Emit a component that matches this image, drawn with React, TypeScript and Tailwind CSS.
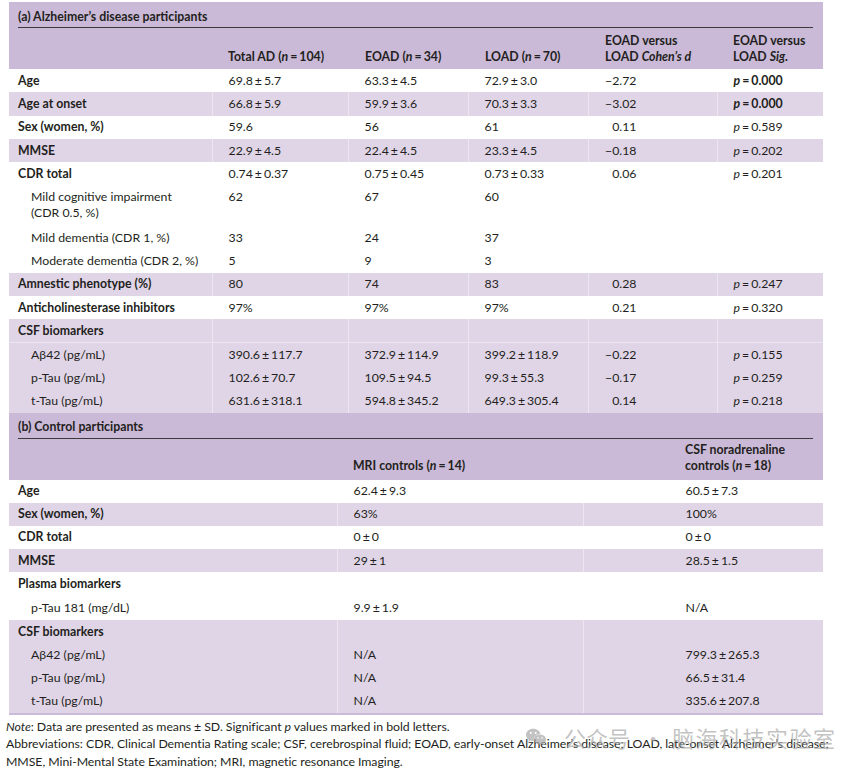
import React from 'react';
import { SiWechat } from 'react-icons/si';

type Row = {
  label: React.ReactNode;
  sub?: boolean;
  shade?: boolean;
  vals: React.ReactNode[];
  d?: string;
  p?: string;
  pBold?: boolean;
  h?: string;
  topLine?: boolean;
};

const pm = (a: string, b: string) => (
  <>
    {a}
    <span className="mx-[2px]">±</span>
    {b}
  </>
);

const N = ({ v }: { v: string }) => (
  <>
    (<i>n</i>
    <span className="mx-[2px]">=</span>
    {v})
  </>
);

const rowsA: Row[] = [
  { label: 'Age', vals: [pm('69.8', '5.7'), pm('63.3', '4.5'), pm('72.9', '3.0')], d: '−2.72', p: '0.000', pBold: true },
  { label: 'Age at onset', shade: true, vals: [pm('66.8', '5.9'), pm('59.9', '3.6'), pm('70.3', '3.3')], d: '−3.02', p: '0.000', pBold: true },
  { label: 'Sex (women, %)', vals: ['59.6', '56', '61'], d: '0.11', p: '0.589' },
  { label: 'MMSE', shade: true, vals: [pm('22.9', '4.5'), pm('22.4', '4.5'), pm('23.3', '4.5')], d: '−0.18', p: '0.202' },
  { label: 'CDR total', vals: [pm('0.74', '0.37'), pm('0.75', '0.45'), pm('0.73', '0.33')], d: '0.06', p: '0.201' },
  {
    label: (
      <>
        Mild cognitive impairment
        <br />
        (CDR 0.5, %)
      </>
    ),
    sub: true,
    vals: ['62', '67', '60'],
    h: 'h-[40.3px]',
  },
  { label: 'Mild dementia (CDR 1, %)', sub: true, vals: ['33', '24', '37'] },
  { label: 'Moderate dementia (CDR 2, %)', sub: true, vals: ['5', '9', '3'] },
  { label: 'Amnestic phenotype (%)', shade: true, vals: ['80', '74', '83'], d: '0.28', p: '0.247' },
  { label: 'Anticholinesterase inhibitors', vals: ['97%', '97%', '97%'], d: '0.21', p: '0.320' },
  { label: 'CSF biomarkers', shade: true, vals: ['', '', ''] },
  { label: 'Aβ42 (pg/mL)', sub: true, shade: true, topLine: true, vals: [pm('390.6', '117.7'), pm('372.9', '114.9'), pm('399.2', '118.9')], d: '−0.22', p: '0.155' },
  { label: 'p-Tau (pg/mL)', sub: true, shade: true, vals: [pm('102.6', '70.7'), pm('109.5', '94.5'), pm('99.3', '55.3')], d: '−0.17', p: '0.259' },
  { label: 't-Tau (pg/mL)', sub: true, shade: true, vals: [pm('631.6', '318.1'), pm('594.8', '345.2'), pm('649.3', '305.4')], d: '0.14', p: '0.218' },
];

const rowsB: Row[] = [
  { label: 'Age', vals: [pm('62.4', '9.3'), pm('60.5', '7.3')], h: 'h-[23px]' },
  { label: 'Sex (women, %)', shade: true, vals: ['63%', '100%'], h: 'h-[23px]' },
  { label: 'CDR total', vals: [pm('0', '0'), pm('0', '0')], h: 'h-[23.5px]' },
  { label: 'MMSE', shade: true, vals: [pm('29', '1'), pm('28.5', '1.5')], h: 'h-[23px]' },
  { label: 'Plasma biomarkers', vals: ['', ''], h: 'h-[23px]' },
  { label: 'p-Tau 181 (mg/dL)', sub: true, vals: [pm('9.9', '1.9'), 'N/A'], h: 'h-[25px]' },
  { label: 'CSF biomarkers', shade: true, vals: ['', ''], h: 'h-[23px]' },
  { label: 'Aβ42 (pg/mL)', sub: true, shade: true, vals: ['N/A', pm('799.3', '265.3')], h: 'h-[23.5px]' },
  { label: 'p-Tau (pg/mL)', sub: true, shade: true, vals: ['N/A', pm('66.5', '31.4')], h: 'h-[23.5px]' },
  { label: 't-Tau (pg/mL)', sub: true, shade: true, vals: ['N/A', pm('335.6', '207.8')], h: 'h-[23.5px]' },
];

const Label = ({ r }: { r: Row }) =>
  r.sub ? <span className="pl-[13px] inline-block">{r.label}</span> : <span className="font-bold">{r.label}</span>;

export default function App() {
  return (
    <div
      className="w-[865px] h-[777px] bg-white text-[#231f20] overflow-hidden"
      style={{ fontFamily: 'Lato, "Noto Sans", sans-serif' }}
    >
      <div className="pt-[2px] pl-[9px]">
        <table className="table-fixed border-collapse w-[814px] text-[12.3px] leading-[16px]">
          <colgroup>
            <col className="w-[203px]" />
            <col className="w-[136px]" />
            <col className="w-[120px]" />
            <col className="w-[120px]" />
            <col className="w-[129px]" />
            <col className="w-[106px]" />
          </colgroup>
          <tbody>
            <tr className="bg-[#cab9d7]">
              <td colSpan={6} className="p-0 pl-[9px] pr-[10px]">
                <div className="pt-[7px] pb-[2px] border-b border-[#3a3a3a] font-bold">
                  (a) Alzheimer’s disease participants
                </div>
              </td>
            </tr>
            <tr className="bg-[#cab9d7] h-[41px] font-bold">
              <td className="p-0" />
              <td className="p-0 pl-[16px] pb-[4px] align-bottom">
                Total AD <N v="104" />
              </td>
              <td className="p-0 pl-[17px] pb-[4px] align-bottom">
                EOAD <N v="34" />
              </td>
              <td className="p-0 pl-[17px] pb-[4px] align-bottom">
                LOAD <N v="70" />
              </td>
              <td className="p-0 pl-[17px] pb-[4px] align-bottom">
                EOAD versus
                <br />
                LOAD <i>Cohen’s d</i>
              </td>
              <td className="p-0 pl-[16px] pb-[4px] align-bottom">
                EOAD versus
                <br />
                LOAD <i>Sig.</i>
              </td>
            </tr>
            {rowsA.map((r, i) => (
              <tr
                key={i}
                className={`${r.h ?? 'h-[23.33px]'} ${r.shade ? 'bg-[#e0d5e7]' : 'bg-white'} ${
                  r.topLine ? 'border-t border-white/40' : ''
                }`}
              >
                <td className="p-0 pl-[9px] pt-[3.7px] align-top">
                  <Label r={r} />
                </td>
                {r.vals.map((v, j) => (
                  <td key={j} className="p-0 pl-[16px] pt-[3.7px] align-top border-l border-white/40">
                    {v}
                  </td>
                ))}
                <td className="p-0 pr-[80px] pt-[3.7px] align-top text-right border-l border-white/40">{r.d}</td>
                <td className="p-0 pl-[16px] pt-[3.7px] align-top border-l border-white/40">
                  {r.p && (
                    <span className={r.pBold ? 'font-bold' : ''}>
                      <i>p</i>
                      <span className="mx-[2px]">=</span>
                      {r.p}
                    </span>
                  )}
                </td>
              </tr>
            ))}
          </tbody>
        </table>

        <table className="table-fixed border-collapse w-[814px] text-[12.3px] leading-[16px] border-b-2 border-[#cbbad8]">
          <colgroup>
            <col className="w-[328px]" />
            <col className="w-[246px]" />
            <col className="w-[240px]" />
          </colgroup>
          <tbody>
            <tr className="bg-[#cab9d7]">
              <td colSpan={3} className="p-0 pl-[9px] pr-[10px]">
                <div className="pt-[6px] pb-[3px] border-b border-[#3a3a3a] font-bold">(b) Control participants</div>
              </td>
            </tr>
            <tr className="bg-[#cab9d7] h-[41px] font-bold">
              <td className="p-0" />
              <td className="p-0 pl-[16px] pb-[6px] align-bottom">
                MRI controls <N v="14" />
              </td>
              <td className="p-0 pl-[102px] pb-[6px] align-bottom">
                CSF noradrenaline
                <br />
                controls <N v="18" />
              </td>
            </tr>
            {rowsB.map((r, i) => (
              <tr key={i} className={`${r.h} ${r.shade ? 'bg-[#e0d5e7]' : 'bg-white'}`}>
                <td className="p-0 pl-[9px] align-middle">
                  <Label r={r} />
                </td>
                <td className="p-0 pl-[16px] align-middle border-l border-white/40">{r.vals[0]}</td>
                <td className="p-0 pl-[102px] align-middle border-l border-white/40">{r.vals[1]}</td>
              </tr>
            ))}
          </tbody>
        </table>
      </div>

      <div className="relative pl-[6px] pt-[3px] text-[12.3px] leading-[17.5px] tracking-[-0.05px]">
        <p>
          <i>Note</i>: Data are presented as means ± SD. Significant <i>p</i> values marked in bold letters.
        </p>
        <p className="whitespace-nowrap">
          Abbreviations: CDR, Clinical Dementia Rating scale; CSF, cerebrospinal fluid; EOAD, early-onset Alzheimer’s
          disease; LOAD, late-onset Alzheimer’s disease;
        </p>
        <p>MMSE, Mini-Mental State Examination; MRI, magnetic resonance Imaging.</p>

        <div
          className="absolute left-[526px] top-[8px] flex items-center text-[#a8a8a8]/70 tracking-normal"
          style={{ fontFamily: '"Noto Sans CJK SC", sans-serif' }}
        >
          <SiWechat className="w-[20px] h-[20px]" />
          <span className="ml-[18px] text-[22px] leading-[28px]">公众号</span>
          <span className="ml-[12px] text-[22px] leading-[28px]">·</span>
          <span className="ml-[8px] text-[22px] leading-[28px] tracking-[1.5px]">脑海科技实验室</span>
        </div>
      </div>
    </div>
  );
}
